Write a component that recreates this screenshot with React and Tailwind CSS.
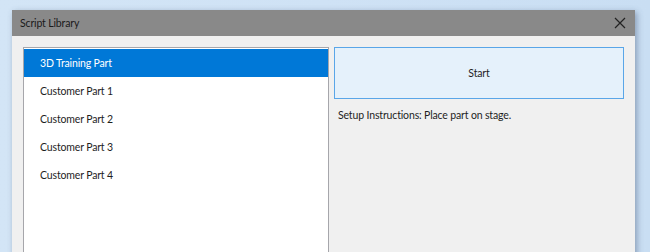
import React, { useState } from 'react';

const parts = ['3D Training Part', 'Customer Part 1', 'Customer Part 2', 'Customer Part 3', 'Customer Part 4'];

export default function App() {
  const [selected, setSelected] = useState(0);

  return (
    <div className="w-[650px] h-[252px] overflow-hidden bg-gradient-to-r from-[#d3e5f6] via-[#cfe2f5] to-[#c9def3] pl-[12px] pt-[10px] font-['Lato','Roboto',sans-serif] text-[10.5px] tracking-[-0.15px] text-[#1e1e1e]">
      {/* DIALOG WINDOW */}
      <div className="w-[623px] h-[260px] flex flex-col bg-[#f0f0f0] shadow-[2px_2px_6px_rgba(60,80,110,0.45)]">
        <div className="h-[26px] shrink-0 bg-[#898989] flex items-center justify-between pl-[8px] pr-[9px] pt-[2px]">
          <span className="text-[#1a1a1a]">Script Library</span>
          <svg width="12" height="12" viewBox="0 0 12 12" className="text-[#222] -mt-[2px]">
            <path d="M1 1 L11 11 M11 1 L1 11" stroke="currentColor" strokeWidth="1.2" fill="none" />
          </svg>
        </div>

        <div className="flex-1 flex gap-[5px] pl-[11px] pt-[11px]">
          {/* LIST */}
          <div className="w-[306px] h-[220px] border border-[#a6a6ab] bg-white pt-px">
            {parts.map((p, i) => (
              <div
                key={p}
                onClick={() => setSelected(i)}
                className={`h-[28px] flex items-center pl-[16px] pt-px ${selected === i ? 'bg-[#0078d7] text-white' : 'text-[#1e1e1e]'}`}
              >
                {p}
              </div>
            ))}
          </div>

          {/* RIGHT PANE */}
          <div className="flex flex-col">
            <button className="w-[290px] h-[52px] bg-[#e5f1fb] border border-[#5aa6e8] text-[#1e1e1e] flex items-center justify-center pt-px">
              Start
            </button>
            <p className="mt-[9px] pl-[4px]">Setup Instructions: Place part on stage.</p>
          </div>
        </div>
      </div>
    </div>
  );
}
